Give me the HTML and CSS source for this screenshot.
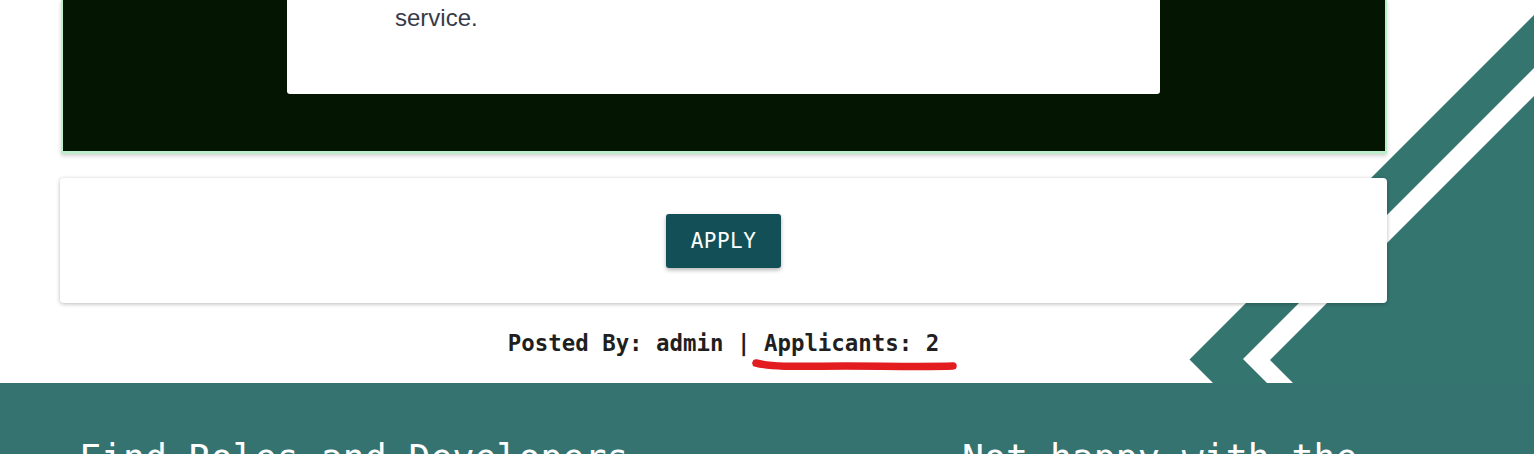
FILE: index.html
```html
<!DOCTYPE html>
<html lang="en">
<head>
<meta charset="utf-8">
<title>Job detail</title>
<link rel="stylesheet" href="styles.css">
</head>
<body>
<div class="page">
  <svg class="deco" width="354" height="383" viewBox="1180 0 354 383" aria-hidden="true">
    <polygon points="1534,15 1189.5,359.5 1213,383 1534,383" fill="#357570"/>
    <polygon points="1534,68 1243,359 1267,383 1293,383 1270,360 1534,96" fill="#ffffff"/>
  </svg>

  <main class="content">
    <section class="desc-box">
      <div class="desc-card">
        <p class="desc-text">service.</p>
      </div>
    </section>

    <section class="apply-card">
      <button class="apply-btn" type="button">APPLY</button>
    </section>

    <p class="meta">Posted By: admin | <span class="applicants">Applicants: 2</span></p>
  </main>

  <svg class="scribble" width="220" height="20" viewBox="745 355 220 20" aria-hidden="true">
    <path d="M756 363 C 775 368, 810 366, 845 366 S 925 367, 953 366" fill="none" stroke="#e31c1f" stroke-width="7.5" stroke-linecap="round"/>
  </svg>

  <footer class="footer">
    <div class="footer-col">Find Roles and Developers</div>
    <div class="footer-col">Not happy with the</div>
  </footer>
</div>
</body>
</html>
```

FILE: styles.css
```css
* { box-sizing: border-box; }

html, body {
  margin: 0;
  padding: 0;
  background: #ffffff;
  overflow: hidden;
}

.page {
  position: relative;
  width: 1534px;
  height: 454px;
  overflow: hidden;
}

.deco {
  position: absolute;
  top: 0;
  right: 0;
  z-index: 0;
}

.content {
  position: relative;
  z-index: 1;
  padding: 0 147px 0 60px;
  display: flex;
  flex-direction: column;
}

.desc-box {
  background: #041602;
  border: 2px solid #bdeecb;
  border-bottom-width: 3px;
  border-top: 0;
  margin: 0 0.5px;
  padding: 0 0 57px;
  display: flex;
  justify-content: center;
  box-shadow: 0 2px 4px rgba(0, 0, 0, 0.18);
}

.desc-card {
  width: 873px;
  background: #ffffff;
  border-radius: 0 0 3px 3px;
  padding: 0 0 58px 108px;
}

.desc-text {
  margin: 0;
  font-family: "Liberation Sans", Arial, sans-serif;
  font-size: 24px;
  line-height: 36px;
  color: #363b4a;
}

.apply-card {
  margin-top: 24px;
  height: 125px;
  background: #ffffff;
  border-radius: 4px;
  box-shadow: 0 1px 4px rgba(0, 0, 0, 0.28);
  display: flex;
  justify-content: center;
  align-items: flex-start;
  padding-top: 36px;
}

.apply-btn {
  width: 115px;
  height: 54px;
  border: 0;
  border-radius: 3px;
  background: #134f57;
  color: #ffffff;
  font-family: "DejaVu Sans Mono", "Liberation Mono", monospace;
  font-size: 21px;
  letter-spacing: 0.5px;
  box-shadow: 0 2px 4px rgba(0, 0, 0, 0.3);
  padding: 0;
}

.meta {
  margin: 26px 0 0;
  text-align: center;
  font-family: "DejaVu Sans Mono", "Liberation Mono", monospace;
  font-weight: bold;
  font-size: 22.4px;
  line-height: 28px;
  color: #1f1f1f;
}

.scribble {
  position: absolute;
  left: 745px;
  top: 355px;
  z-index: 2;
}

.footer {
  position: absolute;
  left: 0;
  right: 0;
  top: 383px;
  height: 200px;
  background: #357370;
  display: grid;
  grid-template-columns: 883px 1fr;
  padding: 54px 0 0 79px;
  color: #ffffff;
  font-family: "DejaVu Sans Mono", "Liberation Mono", monospace;
  font-size: 36.5px;
  line-height: 44px;
  font-weight: normal;
  z-index: 1;
}

.footer-col { white-space: nowrap; }
```
